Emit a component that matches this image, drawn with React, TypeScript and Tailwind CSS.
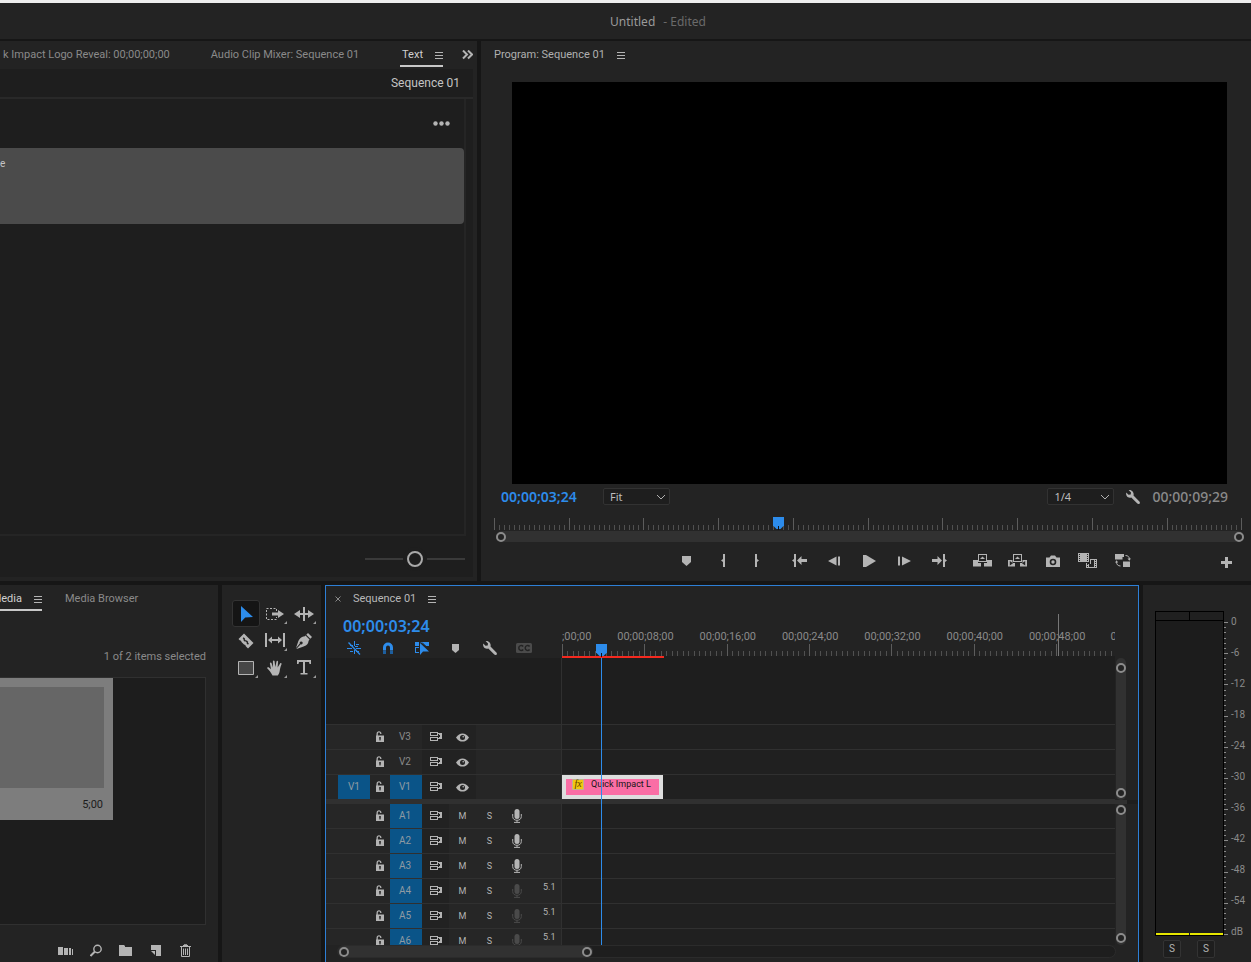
import type { ReactNode } from 'react';
import clsx from 'clsx';

type IconProps = { w?: number; h?: number; className?: string; children: ReactNode };

function Icon({ w = 20, h = 20, className, children }: IconProps) {
  return (
    <svg
      width={w}
      height={h}
      viewBox={`0 0 ${w} ${h}`}
      className={clsx('shrink-0', className)}
      fill="currentColor"
      aria-hidden="true"
    >
      {children}
    </svg>
  );
}

/* ---------- icons ---------- */

const MenuIcon = () => (
  <Icon w={8} h={8} className="text-[#b4b4b4]">
    <path d="M0 1h8v1H0zM0 4h8v1H0zM0 7h8v1H0z" />
  </Icon>
);

const WrenchIcon = () => (
  <Icon w={16} h={16}>
    <path d="M3.600 1 6 3.400l-.3 2-2.200.3L1.200 3.500C.8 5.500 1.500 7.400 3 8.200c1.200.6 2.300.5 3.300.2l6 6.200c.6.600 1.600.7 2.200.1s.5-1.600-.1-2.200L8.500 6.600c.4-1.300.2-2.700-.7-3.900C6.800 1.400 5.200.7 3.600 1z" />
  </Icon>
);

const MarkerIcon = () => (
  <Icon w={9} h={10}>
    <path d="M0 0h9v6L4.500 10 0 6z" />
  </Icon>
);

const LockIcon = () => (
  <Icon w={8} h={12}>
    <path d="M.5 5V3C.5 1.300 1.600.3 3 .3S5.500 1.300 5.500 3H4.200c0-.9-.5-1.400-1.200-1.400S1.800 2.100 1.800 3v2z" />
    <path fillRule="evenodd" d="M0 4.500h8V11H0zM3.200 6v1.500l.3 2h1l.3-2V6z" />
  </Icon>
);

const SyncLockIcon = () => (
  <Icon w={12} h={10}>
    <path
      fillRule="evenodd"
      d="M0 0h8v4H0zM1 1v2h6V1zM0 5h8v4H0zM1 6v2h6V6z"
    />
    <path d="M8 1h4v6H8V6h1V2H8z" />
    <path d="M9 3h1v2H9z" fill="#232323" />
  </Icon>
);

const EyeIcon = () => (
  <Icon w={13} h={9}>
    <path d="M0 4.500C2 1.500 4 .4 6.500.4s4.500 1.100 6.500 4.100c-2 3-4 4.100-6.500 4.100S2 7.500 0 4.500z" />
    <circle cx="6.500" cy="4.500" r="2.500" fill="#232323" />
    <circle cx="7.200" cy="3.800" r="0.800" />
  </Icon>
);

const MicIcon = () => (
  <Icon w={10} h={14}>
    <rect x="2.500" y="0" width="5" height="10" rx="2.500" />
    <path
      d="M.7 5v2.600c0 2.300 1.800 3.700 4.300 3.700s4.300-1.400 4.300-3.700V5M5 11.300V13M2 13.400h6"
      fill="none"
      stroke="currentColor"
    />
  </Icon>
);

const ChevronIcon = () => (
  <Icon w={10} h={6} className="pointer-events-none absolute top-[6px] right-1 text-[#b0b0b0]">
    <path d="M1 1l4 4 4-4" fill="none" stroke="currentColor" />
  </Icon>
);

function Playhead() {
  return (
    <Icon w={11} h={13} className="text-[#2d8ceb]">
      <path d="M0 0h11v8.500L7.500 12h-4L0 8.500z" />
      <path fill="#111" d="M5 9h1v4H5z" />
    </Icon>
  );
}

const transportGroups: { label: string; icon: ReactNode }[][] = [
  [
    { label: 'Add Marker', icon: <MarkerIcon /> },
    {
      label: 'Mark In',
      icon: (
        <Icon w={8} h={13}>
          <path d="M5 0h2v13H5V8L3 6.500 5 5z" />
        </Icon>
      ),
    },
    {
      label: 'Mark Out',
      icon: (
        <Icon w={8} h={13}>
          <path d="M2 0h2v5l2 1.500L4 8v5H2z" />
        </Icon>
      ),
    },
  ],
  [
    {
      label: 'Go to In',
      icon: (
        <Icon w={16} h={13}>
          <path d="M2 0h2v13H2V8L0 6.500 2 5zM5 6.500 9.500 2v3H15v3H9.500v3z" />
        </Icon>
      ),
    },
    {
      label: 'Step Back',
      icon: (
        <Icon w={13} h={10}>
          <path d="M0 5 8.500.5v9zM10 .5h2v9h-2z" />
        </Icon>
      ),
    },
    {
      label: 'Play',
      icon: (
        <Icon w={13} h={12}>
          <path d="M0 0h3l10 6-10 6H0z" />
        </Icon>
      ),
    },
    {
      label: 'Step Forward',
      icon: (
        <Icon w={13} h={10}>
          <path d="M0 .5h2v9H0zM4 .5 13 5 4 9.500z" />
        </Icon>
      ),
    },
    {
      label: 'Go to Out',
      icon: (
        <Icon w={16} h={13}>
          <path d="M0 5h5.500V2L10 6.500 5.500 11V8H0zM11 0h2v5l2 1.500L13 8v5h-2z" />
        </Icon>
      ),
    },
  ],
  [
    {
      label: 'Lift',
      icon: (
        <Icon w={19} h={13}>
          <path d="M0 6h5v3h3v3.500H0zM14 6h5v6.500h-8V9h3z" />
          <path fillRule="evenodd" d="M5 0h9v8H5zM6 1v6h7V1z" />
          <path d="M9.500 2.500 12 5H7z" />
        </Icon>
      ),
    },
    {
      label: 'Extract',
      icon: (
        <Icon w={19} h={13}>
          <path
            fillRule="evenodd"
            d="M0 6h4.500v3H7v3.500H0zM1.800 7v4.500L5 9.300zM14.500 6H19v6.500h-7V9h2.500zM17.200 7v4.500L14 9.300z"
          />
          <path fillRule="evenodd" d="M5 0h9v8H5zM6 1v6h7V1z" />
          <path d="M9.500 2.500 12 5H7z" />
        </Icon>
      ),
    },
    {
      label: 'Export Frame',
      icon: (
        <Icon w={14} h={12}>
          <path
            fillRule="evenodd"
            d="M0 2.500h3.500L5 .5h4l1.500 2H14V12H0zM7 3.700a3.300 3.300 0 1 0 0 6.600 3.300 3.300 0 0 0 0-6.600zM7 5.300a1.700 1.700 0 1 1 0 3.400 1.700 1.700 0 0 1 0-3.400z"
          />
        </Icon>
      ),
    },
    {
      label: 'Comparison View',
      icon: (
        <Icon w={19} h={15}>
          <path d="M0 0h11v9H0z" />
          <path d="M1.500 1v7M9.500 1v7" stroke="#232323" strokeDasharray="1 1" />
          <path fillRule="evenodd" d="M12 6h7v9H8v-5h1v1h3zM11 11v3h5V7h-3v4z" />
          <path d="M9.500 11v3M17.500 7v7" stroke="#232323" strokeDasharray="1 1" />
        </Icon>
      ),
    },
    {
      label: 'Toggle Proxies',
      icon: (
        <Icon w={16} h={13}>
          <path d="M0 0h9v3H7.500v2.500H0zM8 7.500h7V13H8z" />
          <path
            d="M10.500 1.500c2.500 0 4 1.500 4 4M5.500 12C3 12 1.500 10.500 1.500 8"
            fill="none"
            stroke="currentColor"
          />
          <path d="M12.500 4.500H16l-1.700 2.300zM0 8.500h3.200L1.600 6.300z" />
        </Icon>
      ),
    },
  ],
];

const ToolCorner = () => (
  <Icon w={3} h={3} className="absolute right-[2px] bottom-[3px] text-[#9a9a9a]">
    <path d="M3 0v3H0z" />
  </Icon>
);

const tools: { label: string; menu?: boolean; active?: boolean; icon: ReactNode }[] = [
  {
    label: 'Selection Tool',
    active: true,
    icon: (
      <Icon w={13} h={18} className="text-[#2d8ceb]">
        <path d="M1 1v16l4.200-4.600L13 12z" />
      </Icon>
    ),
  },
  {
    label: 'Track Select Forward Tool',
    menu: true,
    icon: (
      <Icon w={18} h={12}>
        <path d="M.5.500h10V11.500H.5z" fill="none" stroke="currentColor" strokeDasharray="2 1.500" />
        <path fill="#232323" d="M5 3h8v6H5z" />
        <path d="M6 4.500h6V2l6 4-6 4V7.500H6z" />
      </Icon>
    ),
  },
  {
    label: 'Ripple Edit Tool',
    menu: true,
    icon: (
      <Icon w={20} h={14}>
        <path d="M9 0h2v14H9zM0 7l6-4v3h8V3l6 4-6 4V8H6v3z" />
      </Icon>
    ),
  },
  {
    label: 'Razor Tool',
    icon: (
      <Icon w={16} h={16}>
        <path
          fillRule="evenodd"
          d="M6 .5 15.500 10 10 15.500 7.800 13.300l-.5-1.300-1.300-.500L3.500 9l-.5-1.300-1.300-.5L.5 6zM4.700 5.300l1 1.200-.4.600 1.600 1.600.6-.4 1.400 1.400-.4.600 1.400 1.400 1-1-1-1.200.4-.6-1.600-1.600-.6.4-1.400-1.400.4-.6-1.400-1.400z"
        />
      </Icon>
    ),
  },
  {
    label: 'Slip Tool',
    menu: true,
    icon: (
      <Icon w={20} h={15}>
        <path d="M0 0h2v14H0zM18 0h2v14h-2zM3 7l4-3.500V6h6V3.500L17 7l-4 3.500V8H7v2.500z" />
      </Icon>
    ),
  },
  {
    label: 'Pen Tool',
    icon: (
      <Icon w={16} h={16}>
        <path d="M10.300 1.700 12 0l4 4-1.700 1.700z" />
        <path
          fillRule="evenodd"
          d="m9.500 2.500 4 4-1 1.500c0 3-2.500 5-6.300 6L.6 16l-.1-.3 4.200-4.400a1.500 1.500 0 1 0-.9-.9L0 15l1.800-5.200c1-3.800 3.500-6.300 6.500-6.300z"
        />
      </Icon>
    ),
  },
  {
    label: 'Rectangle Tool',
    menu: true,
    icon: (
      <Icon w={16} h={14}>
        <path d="M.5.500h15v13H.5z" fill="#474747" stroke="currentColor" />
      </Icon>
    ),
  },
  {
    label: 'Hand Tool',
    menu: true,
    icon: (
      <Icon w={16} h={16}>
        <path d="M5.500 15.500C3.800 12.500 2 10 .2 8.300c-.4-.8.700-1.500 1.500-1L4 9.200 2.900 3.500c-.2-1 1.200-1.300 1.600-.4L6 7.500 5.900 1.200C6 .1 7.400.1 7.600 1.200L8.300 7l1.200-5.600c.3-1 1.600-.8 1.600.3l-.5 5.800 2.500-4c.6-.9 1.800-.3 1.400.7-1.200 3-1.500 4.500-1.800 6.800-.3 2-1.200 3.500-2 4.500z" />
      </Icon>
    ),
  },
  {
    label: 'Type Tool',
    menu: true,
    icon: (
      <Icon w={14} h={15}>
        <path d="M0 0h14v4h-1.500L12 2H8v11h2.500v1.500h-7V13H6V2H2l-.5 2H0z" />
      </Icon>
    ),
  },
];

const timelineToggles: { label: string; className: string; icon: ReactNode }[] = [
  {
    label: 'Insert and overwrite sequences as nests',
    className: 'text-[#2d8ceb]',
    icon: (
      <Icon w={14} h={14}>
        <path d="M7 0h1v5H7zM7 9h1v4H7zM0 7h5v1H0zM9 7h5v1H9zM3 4h3v1H3zM9 3h3v1H9zM8 5h3v1H8zM3 10h3v1H3zM9 10h3v1H9z" />
        <path d="m1.500 1.500 11.500 12" stroke="currentColor" strokeWidth="1.300" />
      </Icon>
    ),
  },
  {
    label: 'Snap in Timeline',
    className: 'text-[#2d8ceb]',
    icon: (
      <Icon w={12} h={13}>
        <path d="M2.500 8.500V5.500a3.500 3.500 0 0 1 7 0v3" fill="none" stroke="currentColor" strokeWidth="3" />
        <path d="M1 9h3v3H1zM8 9h3v3H8z" fill="#1d5f9f" />
      </Icon>
    ),
  },
  {
    label: 'Linked Selection',
    className: 'text-[#2d8ceb]',
    icon: (
      <Icon w={14} h={14}>
        <path d="M0 1h4v4H0zM5 1h9v4h-3L6 1.500zM0 6h4v1H1v4h3v1H0z" />
        <path d="M5 2v12l3-3.500h6z" />
        <path d="M7 1.500 11.500 6" stroke="#232323" />
      </Icon>
    ),
  },
  {
    label: 'Add Marker',
    className: 'text-[#b4b4b4]',
    icon: (
      <Icon w={8} h={9}>
        <path d="M0 0h7v6L3.500 9 0 6z" />
      </Icon>
    ),
  },
  { label: 'Timeline Display Settings', className: 'text-[#b4b4b4]', icon: <WrenchIcon /> },
  {
    label: 'Captions track options',
    className: 'text-[#4b4b4b]',
    icon: (
      <Icon w={16} h={10}>
        <rect width="16" height="10" rx="1.500" />
        <path
          d="M7.200 3.500C6 2 2.800 2.200 2.800 5s3.200 3 4.400 1.500M13.600 3.500C12.400 2 9.200 2.200 9.200 5s3.200 3 4.400 1.500"
          fill="none"
          stroke="#232323"
          strokeWidth="1.500"
        />
      </Icon>
    ),
  },
];

const projectActions: { label: string; icon: ReactNode }[] = [
  {
    label: 'Automate to Sequence',
    icon: (
      <Icon w={16} h={10}>
        <path d="M0 1h5v8H0zM6 2h4v7H6zM11 2h2v7h-2zM14 3h1v6h-1z" />
      </Icon>
    ),
  },
  {
    label: 'Find',
    icon: (
      <Icon w={13} h={13}>
        <circle cx="7.500" cy="5" r="3.700" fill="none" stroke="currentColor" strokeWidth="1.400" />
        <path d="m5 7.500-4.500 4.500" stroke="currentColor" strokeWidth="2" />
      </Icon>
    ),
  },
  {
    label: 'New Bin',
    icon: (
      <Icon w={14} h={11}>
        <path d="M0 0h5l1 1v1H0zM0 2h13v9H0z" />
      </Icon>
    ),
  },
  {
    label: 'New Item',
    icon: (
      <Icon w={12} h={11}>
        <path d="M1 0h10v11H6V5H1zM1 6h4v4z" />
      </Icon>
    ),
  },
  {
    label: 'Clear',
    icon: (
      <Icon w={12} h={13}>
        <path d="M0 2h3V1h1V.3h3V1h1v1h3v1H0z" />
        <path
          d="M1.500 3v9.500h8V3M3.500 4.500v6.500M5.500 4.500v6.500M7.500 4.500v6.500"
          fill="none"
          stroke="currentColor"
        />
      </Icon>
    ),
  },
];

/* ---------- shared pieces ---------- */

const Knob = () => (
  <span className="block size-[10px] shrink-0 rounded-full border-2 border-[#8c8c8c] bg-[#232323]" />
);

// span is the share of the ruler, in percent, that one minor tick takes up
function Ruler({ count, span }: { count: number; span: number }) {
  return (
    <svg width="100%" height="12" className="block" shapeRendering="crispEdges" aria-hidden="true">
      {Array.from({ length: count }, (_, i) => (
        <rect
          key={i}
          x={`${i * span}%`}
          y={i % 15 === 0 ? 0 : 7}
          width="1"
          height={i % 15 === 0 ? 12 : 5}
          fill={i % 15 === 0 ? '#5c5c5c' : '#505050'}
        />
      ))}
    </svg>
  );
}

function Select({ label, options }: { label: string; options: string[] }) {
  return (
    <div className="relative">
      <select
        aria-label={label}
        className="block h-[17px] w-[67px] appearance-none rounded-[2px] border border-[#323232] bg-[#1e1e1e] pr-4 pl-[6px] font-['Noto_Sans',sans-serif] text-[11px] leading-[14px] text-[#bdbdbd]"
      >
        {options.map((o) => (
          <option key={o}>{o}</option>
        ))}
      </select>
      <ChevronIcon />
    </div>
  );
}

/* ---------- panels ---------- */

function TextPanel() {
  return (
    <section className="flex min-h-0 flex-col overflow-hidden bg-[#232323] pr-1 pb-1">
      <div className="flex h-7 shrink-0 items-center justify-end gap-[41px] text-[11px] text-[#8a8a8a]">
        <button className="whitespace-nowrap">k Impact Logo Reveal: 00;00;00;00</button>
        <button className="whitespace-nowrap">Audio Clip Mixer: Sequence 01</button>
        <div className="flex items-center gap-[19px]">
          <div className="mb-[2px] flex h-[26px] items-center gap-3 border-b-2 border-[#c8c8c8] pt-1 pl-[2px]">
            <button className="text-[#d0d0d0]">Text</button>
            <button aria-label="Panel menu">
              <MenuIcon />
            </button>
          </div>
          <button aria-label="More panels" className="text-[#b4b4b4]">
            <Icon w={11} h={10}>
              <path d="m1 .5 4 4-4 4M6 .5l4 4-4 4" fill="none" stroke="currentColor" strokeWidth="2" />
            </Icon>
          </button>
        </div>
      </div>
      <div className="flex h-[30px] shrink-0 items-center justify-end border-b-2 border-[#292929] bg-[#1e1e1e] pr-[13px] text-[12px] text-[#c4c4c4]">
        Sequence 01
      </div>
      <div className="flex min-h-0 flex-1 flex-col bg-[#1e1e1e] pr-[7px]">
        <div className="min-h-0 flex-1 border-r-2 border-b-2 border-[#252525]">
          <div className="flex h-[49px] items-center justify-end pr-[14px]">
            <button aria-label="More options" className="text-[#b4b4b4]">
              <Icon w={17} h={5}>
                <circle cx="2.500" cy="2.500" r="2.200" />
                <circle cx="8.500" cy="2.500" r="2.200" />
                <circle cx="14.500" cy="2.500" r="2.200" />
              </Icon>
            </button>
          </div>
          <div className="h-[76px] rounded-r-[4px] bg-[#4b4b4b] pt-2 text-[10px] text-[#c4c4c4]">e</div>
        </div>
        <div className="flex h-[41px] shrink-0 items-center justify-end pt-1 pr-[1px]">
          <input
            type="range"
            aria-label="Zoom"
            defaultValue={50}
            className="h-5 w-[100px] appearance-none overflow-visible bg-transparent [&::-webkit-slider-runnable-track]:h-[2px] [&::-webkit-slider-runnable-track]:bg-[#3a3a3a] [&::-webkit-slider-thumb]:mt-[-7px] [&::-webkit-slider-thumb]:size-4 [&::-webkit-slider-thumb]:appearance-none [&::-webkit-slider-thumb]:rounded-full [&::-webkit-slider-thumb]:border-2 [&::-webkit-slider-thumb]:border-[#aaaaaa] [&::-webkit-slider-thumb]:bg-[#1e1e1e] [&::-webkit-slider-thumb]:shadow-[0_0_0_4px_#1e1e1e]"
          />
        </div>
      </div>
    </section>
  );
}

function ProgramMonitor() {
  return (
    <section className="flex min-h-0 flex-col bg-[#232323]">
      <div className="flex h-7 shrink-0 items-center gap-3 pl-[13px] text-[11px] text-[#b0b0b0]">
        Program: Sequence 01
        <button aria-label="Panel menu">
          <MenuIcon />
        </button>
      </div>
      <div className="mt-[13px] mr-6 ml-[31px] min-h-0 flex-1 bg-black" />
      <div className="flex h-[25px] shrink-0 items-center pr-[23px] pl-5 font-['Noto_Sans',sans-serif] text-[14px]">
        <span className="w-[102px] font-semibold text-[#2d8ceb]">00;00;03;24</span>
        <Select label="Zoom level" options={['Fit', '50%', '100%']} />
        <div className="ml-auto flex items-center text-[#b4b4b4]">
          <Select label="Playback resolution" options={['1/4', '1/2', 'Full']} />
          <button aria-label="Settings" className="ml-[11px]">
            <WrenchIcon />
          </button>
          <span className="ml-[11px] font-medium text-[#8a8a8a]">00;00;09;29</span>
        </div>
      </div>
      <div className="relative mt-[9px] mr-[9px] ml-[13px] h-3 shrink-0">
        <Ruler count={151} span={0.666} />
        <div className="absolute top-[-1px] left-[37.300%]">
          <Playhead />
        </div>
      </div>
      <div className="mt-[1px] mr-[7px] ml-[15px] flex h-[11px] shrink-0 items-center justify-between rounded-full bg-[#313131]">
        <Knob />
        <Knob />
      </div>
      <div className="mb-[2px] flex h-[37px] shrink-0 items-center justify-end pr-[7px] text-[#b4b4b4]">
        {transportGroups.map((group, i) => (
          <div key={i} className="mr-2 flex">
            {group.map(({ label, icon }) => (
              <button key={label} aria-label={label} className="flex h-6 w-[35px] items-center justify-center">
                {icon}
              </button>
            ))}
          </div>
        ))}
        <button aria-label="Button editor" className="ml-[61px] flex w-[35px] justify-center pt-1">
          <Icon w={11} h={11}>
            <path d="M4 0h3v4h4v3H7v4H4V7H0V4h4z" />
          </Icon>
        </button>
      </div>
    </section>
  );
}

function ProjectPanel() {
  return (
    <section className="flex min-h-0 flex-col overflow-hidden bg-[#232323] pr-3">
      <div className="flex h-7 shrink-0 items-center gap-[23px] text-[11px] text-[#8a8a8a]">
        <div className="mb-[2px] flex h-[26px] items-center gap-3 border-b-2 border-[#c8c8c8] pt-1">
          <button className="flex w-[22px] justify-end overflow-hidden text-[#d0d0d0]">Media</button>
          <button aria-label="Panel menu">
            <MenuIcon />
          </button>
        </div>
        <button>Media Browser</button>
      </div>
      <p className="mt-9 h-7 shrink-0 text-right text-[11px] text-[#8a8a8a]">1 of 2 items selected</p>
      <div className="min-h-0 flex-1 border border-l-0 border-[#303030] bg-[#1d1d1d]">
        <div className="flex h-[142px] w-[113px] flex-col bg-[#7d7d7d] pt-[9px] pr-[9px]">
          <div className="h-[101px] bg-[#666666]" />
          <p className="pt-[9px] pr-[1px] text-right text-[11px] text-[#1c1c1c]">5;00</p>
        </div>
      </div>
      <div className="flex h-[37px] shrink-0 items-center justify-end pt-[14px] pr-[5px] text-[#b4b4b4]">
        {projectActions.map(({ label, icon }) => (
          <button key={label} aria-label={label} className="flex w-[30px] justify-center">
            {icon}
          </button>
        ))}
      </div>
    </section>
  );
}

function ToolsPanel() {
  return (
    <section className="bg-[#232323] pt-[15px] pl-[10px]">
      <div className="grid w-[87px] grid-cols-3 text-[#b4b4b4]">
        {tools.map(({ label, menu, active, icon }) => (
          <button
            key={label}
            aria-label={label}
            className={clsx(
              'relative flex h-[27px] w-7 items-center justify-center',
              active && 'rounded-[3px] border border-[#333333] bg-[#151515]',
            )}
          >
            {icon}
            {menu && <ToolCorner />}
          </button>
        ))}
      </div>
    </section>
  );
}

const timeLabels = [
  '00;00;08;00',
  '00;00;16;00',
  '00;00;24;00',
  '00;00;32;00',
  '00;00;40;00',
  '00;00;48;00',
];

const videoTracks = [{ name: 'V3' }, { name: 'V2' }, { name: 'V1', patched: true }];

const audioTracks = [
  { name: 'A1', mic: true },
  { name: 'A2', mic: true },
  { name: 'A3', mic: true },
  { name: 'A4', format: '5.1' },
  { name: 'A5', format: '5.1' },
  { name: 'A6', format: '5.1' },
];

type TrackHeaderProps = { name: string; patched?: boolean; targeted?: boolean; children: ReactNode };

function TrackHeader({ name, patched, targeted, children }: TrackHeaderProps) {
  return (
    <div className="flex h-[25px] border-b border-[#303030] bg-[#262626] pl-3 text-[10px] text-[#b4b4b4]">
      <button
        aria-label={`Source patch ${name}`}
        className={clsx('w-8', patched && 'bg-[#0a5488] text-[#8f9ba3]')}
      >
        {patched && name}
      </button>
      <button aria-label={`Lock ${name}`} className="flex w-5 items-center justify-center">
        <LockIcon />
      </button>
      <button
        className={clsx('w-8 pr-[2px]', targeted ? 'bg-[#0a5488] text-[#8f9ba3]' : 'text-[#8a8a8a]')}
      >
        {name}
      </button>
      <button aria-label={`Sync lock ${name}`} className="flex w-[27px] items-center justify-center bg-[#222222]">
        <SyncLockIcon />
      </button>
      {children}
    </div>
  );
}

function ScrollTrack({ className }: { className: string }) {
  return (
    <div className="flex w-[23px] shrink-0 bg-[#232323] pl-[1px]">
      <div className={clsx('flex w-[10px] flex-col justify-between rounded-full bg-[#313131]', className)}>
        <Knob />
        <Knob />
      </div>
    </div>
  );
}

function Clip() {
  return (
    <div className="relative h-6 w-[101px] overflow-hidden border-4 border-[#dedede] bg-[#fa6ea5]">
      <div className="flex h-[10px] items-center gap-[7px] pl-[6px] text-[9px] whitespace-nowrap text-[#161616]">
        <i className="h-[11px] w-3 shrink-0 border border-[#c0b48c] bg-[#f2c80f] text-center font-['Liberation_Serif',serif] text-[10px] leading-[8px] text-[#5b3d00]">
          fx
        </i>
        Quick Impact L
      </div>
      <svg
        width="101"
        height="5"
        className="absolute -top-1 -left-1"
        fill="#202020"
        aria-hidden="true"
      >
        <path d="M0 0h5L0 5zM96 0h5v5z" />
      </svg>
    </div>
  );
}

function Timeline() {
  return (
    <section className="flex min-h-0 flex-col overflow-hidden border border-b-0 border-[#2d7fd6] bg-[#232323]">
      <div className="flex h-[26px] shrink-0 items-center pl-[9px] text-[11px] text-[#b8b8b8]">
        <button aria-label="Close Sequence 01" className="text-[#8a8a8a]">
          <Icon w={6} h={6}>
            <path d="m.5.500 5 5M5.500.5l-5 5" stroke="currentColor" />
          </Icon>
        </button>
        <span className="ml-3">Sequence 01</span>
        <button aria-label="Panel menu" className="ml-3">
          <MenuIcon />
        </button>
      </div>

      <div className="flex h-[46px] shrink-0">
        <div className="w-[236px] shrink-0">
          <p className="pt-1 pl-[17px] font-['Noto_Sans',sans-serif] text-[16px] leading-[20px] font-semibold text-[#2d8ceb]">
            00;00;03;24
          </p>
          <div className="flex h-6 items-center pl-[11px]">
            {timelineToggles.map(({ label, className, icon }) => (
              <button key={label} aria-label={label} className={clsx('flex w-[34px] justify-center', className)}>
                {icon}
              </button>
            ))}
          </div>
        </div>
        <div className="relative mr-[23px] flex flex-1 flex-col justify-end overflow-hidden text-[11px] text-[#8a8a8a]">
          <span className="absolute top-[17px] left-0">;00;00</span>
          {timeLabels.map((label, i) => (
            <span
              key={label}
              className="absolute top-[17px] -translate-x-1/2"
              style={{ left: `${(i + 1) * 14.89 + 0.2}%` }}
            >
              {label}
            </span>
          ))}
          <span className="absolute top-[17px] left-[99.200%]">00;00;56;00</span>
          <Ruler count={101} span={0.9927} />
          <span className="h-[2px] bg-[#1e1e1e]">
            <span className="block h-[2px] w-[102px] bg-[#f4291f]" />
          </span>
          <span className="absolute top-[2px] left-[89.700%] h-[42px] w-[1px] bg-[#777777]" />
          <div className="absolute top-8 left-[34px]">
            <Playhead />
          </div>
        </div>
      </div>

      <div className="relative flex min-h-0 flex-1 flex-col overflow-hidden bg-[#1e1e1e]">
        {/* Video tracks */}
        <div className="flex shrink-0">
          <div className="w-[236px] shrink-0 border-r border-[#303030]">
            <div className="h-[67px] border-b border-[#303030]" />
            {videoTracks.map(({ name, patched }) => (
              <TrackHeader key={name} name={name} patched={patched} targeted={patched}>
                <button
                  aria-label={`Toggle ${name} output`}
                  className="flex w-[27px] items-center justify-center bg-[#222222] pt-[1px]"
                >
                  <EyeIcon />
                </button>
              </TrackHeader>
            ))}
          </div>
          <div className="min-w-0 flex-1">
            <div className="h-[67px] border-b border-[#303030]" />
            {videoTracks.map(({ name, patched }) => (
              <div key={name} className="h-[25px] border-b border-[#303030] bg-[#202020]">
                {patched && <Clip />}
              </div>
            ))}
          </div>
          <ScrollTrack className="pt-[5px] pb-[2px]" />
        </div>

        <div className="mr-[11px] h-1 shrink-0 bg-[#303030]" />

        {/* Audio tracks */}
        <div className="flex min-h-0 flex-1">
          <div className="w-[236px] shrink-0 overflow-hidden border-r border-[#303030]">
            {audioTracks.map(({ name, mic, format }) => (
              <TrackHeader key={name} name={name} targeted>
                <button aria-label={`Mute ${name}`} className="w-[27px] text-[9px]">
                  M
                </button>
                <button aria-label={`Solo ${name}`} className="w-[27px] text-[9px]">
                  S
                </button>
                <button
                  aria-label={`Record ${name}`}
                  className={clsx('flex w-[27px] items-center justify-center', !mic && 'text-[#4a4a4a]')}
                >
                  <MicIcon />
                </button>
                {format && <span className="ml-[13px] text-[9px]">{format}</span>}
              </TrackHeader>
            ))}
          </div>
          <div className="min-w-0 flex-1 overflow-hidden">
            {audioTracks.map(({ name }) => (
              <div key={name} className="h-[25px] border-b border-[#303030] bg-[#202020]" />
            ))}
          </div>
          <ScrollTrack className="pt-[1px] pb-[2px]" />
        </div>

        {/* Playhead line */}
        <div className="absolute inset-y-0 left-[275px] w-[1px] bg-[#2d8ceb]" />
      </div>

      {/* Horizontal scroll bar */}
      <div className="h-[17px] shrink-0 pr-[23px] pl-3">
        <div className="mt-[1px] h-[11px] rounded-full bg-[#1e1e1e] outline outline-[#2b2b2b]">
          <div className="flex h-[11px] w-[255px] items-center justify-between rounded-full bg-[#313131] px-[1px]">
            <Knob />
            <Knob />
          </div>
        </div>
      </div>
    </section>
  );
}

const meterLabels = ['0', '-6', '-12', '-18', '-24', '-30', '-36', '-42', '-48', '-54', 'dB'];

function AudioMeters() {
  return (
    <section className="flex min-h-0 flex-col bg-[#232323] pt-[26px] pl-3">
      <div className="flex min-h-0 flex-1">
        <div className="flex w-[69px] flex-col border border-black bg-[#1c1c1c]">
          <div className="flex h-[9px] shrink-0 border-b border-black bg-[#202020]">
            <div className="w-[34px] border-r border-black" />
          </div>
          <div className="flex flex-1 items-end gap-[1px]">
            <div className="h-[2px] flex-1 bg-[#e6e600]" />
            <div className="h-[2px] flex-1 bg-[#e6e600]" />
          </div>
        </div>
        <svg
          width="5"
          className="mt-[11px] mb-[2px] h-auto self-stretch overflow-visible"
          shapeRendering="crispEdges"
          aria-hidden="true"
        >
          {Array.from({ length: 61 }, (_, i) => (
            <rect key={i} x="0" y={`${i / 0.6}%`} width={i % 6 === 0 ? 4 : 2} height="1" fill="#8a8a8a" />
          ))}
        </svg>
        <ul className="mt-[5px] -mb-[2px] ml-[2px] flex flex-col justify-between text-[10px] leading-[12px] text-[#8a8a8a]">
          {meterLabels.map((label) => (
            <li key={label}>{label}</li>
          ))}
        </ul>
      </div>
      <div className="flex h-[26px] shrink-0 gap-4 pt-1 pl-2 text-[10px] text-[#b4b4b4]">
        <button
          aria-label="Solo left channel"
          className="size-[18px] rounded-[2px] border border-[#333333] bg-[#1e1e1e] leading-none"
        >
          S
        </button>
        <button
          aria-label="Solo right channel"
          className="size-[18px] rounded-[2px] border border-[#333333] bg-[#1e1e1e] leading-none"
        >
          S
        </button>
      </div>
    </section>
  );
}

export default function App() {
  return (
    <div className="flex h-screen flex-col overflow-hidden bg-[#161616] font-['Roboto',sans-serif] text-[11px] leading-4">
      <header className="flex h-[39px] shrink-0 items-center justify-center gap-2 border-t-[3px] border-[#ededed] bg-[#232323] pt-[2px] pl-[65px] font-['Noto_Sans',sans-serif] text-[12px] text-[#9a9a9a]">
        <h1>Untitled</h1>
        <span className="text-[#6a6a6a]">- Edited</span>
      </header>
      <main className="mt-[2px] flex min-h-0 flex-1 flex-col gap-1">
        <div className="grid min-h-0 flex-[540] grid-cols-[minmax(0,477fr)_minmax(0,770fr)] grid-rows-[minmax(0,1fr)] gap-1">
          <TextPanel />
          <ProgramMonitor />
        </div>
        <div className="grid min-h-0 flex-[377] grid-cols-[218px_99px_minmax(0,1fr)_108px] grid-rows-[minmax(0,1fr)] gap-1">
          <ProjectPanel />
          <ToolsPanel />
          <Timeline />
          <AudioMeters />
        </div>
      </main>
    </div>
  );
}
